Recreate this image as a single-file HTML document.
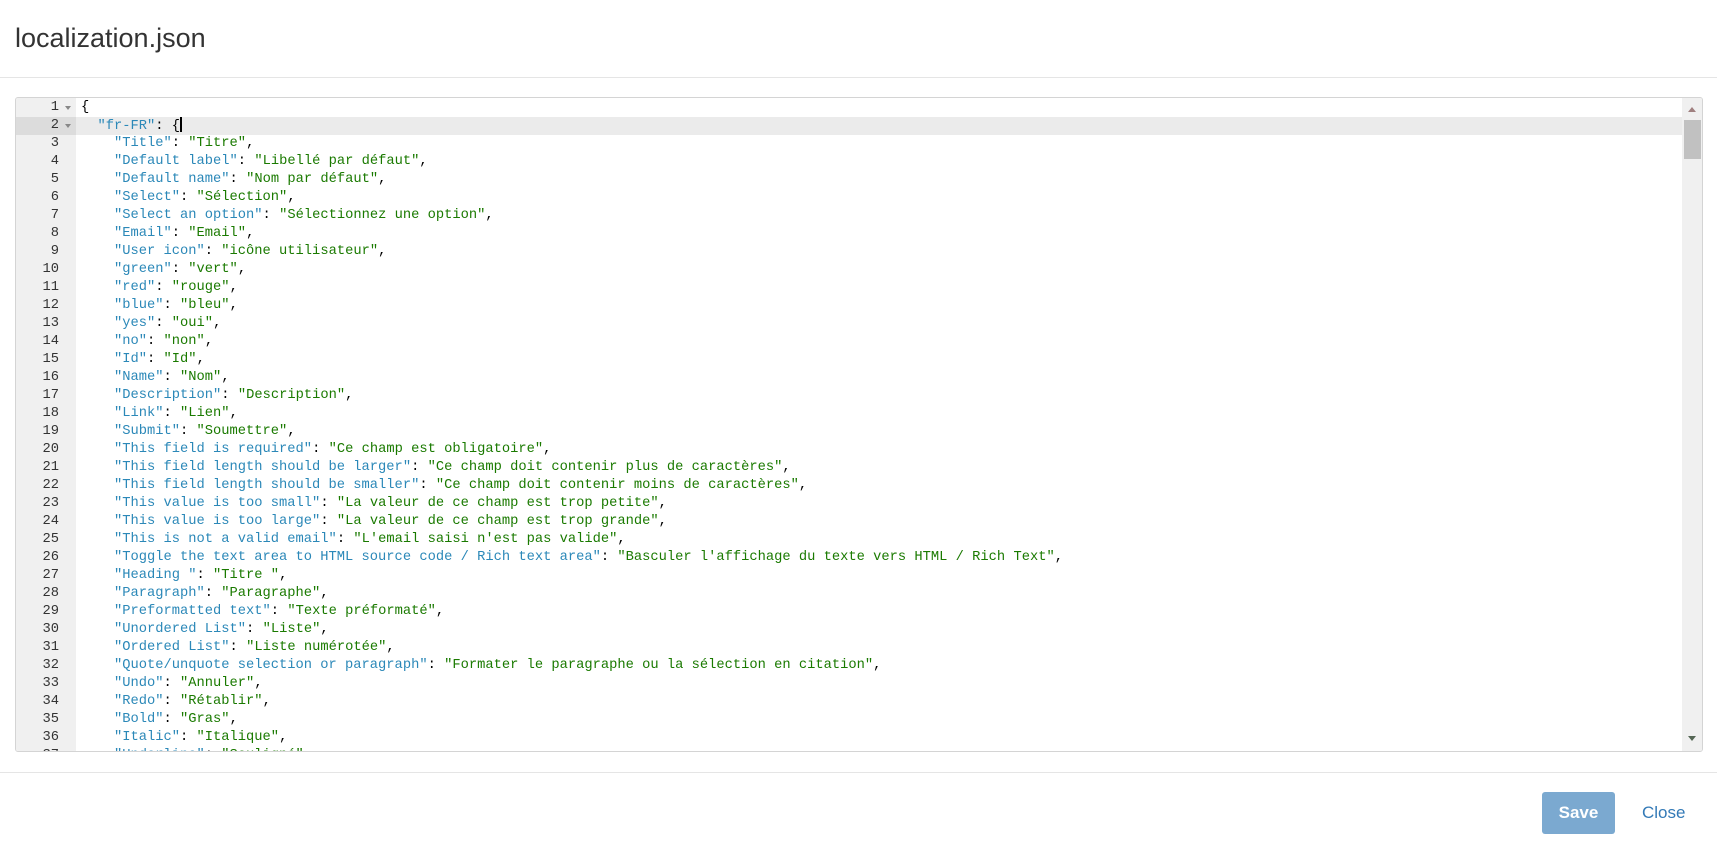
<!DOCTYPE html>
<html><head><meta charset="utf-8"><style>
html,body{margin:0;padding:0;background:#fff;width:1717px;height:845px;overflow:hidden;font-family:"Liberation Sans",Arial,sans-serif}
.title{position:absolute;left:15px;top:20px;font-size:27px;color:#333;line-height:36px}
.hr1{position:absolute;left:0;right:0;top:77px;height:1px;background:#e5e5e5}
.hr2{position:absolute;left:0;right:0;top:772px;height:1px;background:#e5e5e5}
.ed{position:absolute;left:15px;top:97px;width:1686px;height:653px;border:1px solid #d4d4d4;border-radius:3px;overflow:hidden;background:#fff}
.gut{position:absolute;left:0;top:0;width:60px;height:100%;background:#f0f0f0}
.lines{position:absolute;left:0;top:1px;right:0;font-family:"Liberation Mono",monospace;font-size:13.75px;line-height:18px}
.l{height:18px;position:relative}
.l.a{background:#ebebeb}
.l.a .n{background:#dcdcdc}
.n{position:absolute;left:0;width:60px;text-align:right;box-sizing:border-box;padding-right:17px;color:#333}
.f::after{content:"";position:absolute;right:5px;top:7px;border-left:3.5px solid transparent;border-right:3.5px solid transparent;border-top:4px solid #888}
.c{position:absolute;left:65px;color:#000;white-space:pre}
.k{color:#2b88b8}.v{color:#1a7a00}
.cur{display:inline-block;width:1.5px;height:15px;background:#000;vertical-align:-3px}
.sb{position:absolute;right:0;top:0;width:20px;height:100%;background:#f0f0f0}
.th{position:absolute;left:2px;top:22px;width:17px;height:39px;background:#c1c1c1}
.up{position:absolute;left:6px;top:9px;border-left:4.5px solid transparent;border-right:4.5px solid transparent;border-bottom:5px solid #a08080}
.dn{position:absolute;left:6px;bottom:10px;border-left:4.5px solid transparent;border-right:4.5px solid transparent;border-top:5px solid #556655}
.save{position:absolute;left:1542px;top:792px;width:73px;height:42px;background:#7ba9d0;border-radius:3px;color:#fff;font-size:17px;font-weight:bold;text-align:center;line-height:42px}
.close{position:absolute;left:1642px;top:792px;line-height:42px;font-size:17px;color:#337ab7}
</style></head><body>
<div class="title">localization.json</div>
<div class="hr1"></div>
<div class="ed"><div class="gut"></div>
<div class="lines">
<div class="l"><span class="n f">1</span><span class="c">{</span></div>
<div class="l a"><span class="n f">2</span><span class="c">  <span class="k">"fr-FR"</span>: {<span class="cur"></span></span></div>
<div class="l"><span class="n">3</span><span class="c">    <span class="k">"Title"</span>: <span class="v">"Titre"</span>,</span></div>
<div class="l"><span class="n">4</span><span class="c">    <span class="k">"Default label"</span>: <span class="v">"Libellé par défaut"</span>,</span></div>
<div class="l"><span class="n">5</span><span class="c">    <span class="k">"Default name"</span>: <span class="v">"Nom par défaut"</span>,</span></div>
<div class="l"><span class="n">6</span><span class="c">    <span class="k">"Select"</span>: <span class="v">"Sélection"</span>,</span></div>
<div class="l"><span class="n">7</span><span class="c">    <span class="k">"Select an option"</span>: <span class="v">"Sélectionnez une option"</span>,</span></div>
<div class="l"><span class="n">8</span><span class="c">    <span class="k">"Email"</span>: <span class="v">"Email"</span>,</span></div>
<div class="l"><span class="n">9</span><span class="c">    <span class="k">"User icon"</span>: <span class="v">"icône utilisateur"</span>,</span></div>
<div class="l"><span class="n">10</span><span class="c">    <span class="k">"green"</span>: <span class="v">"vert"</span>,</span></div>
<div class="l"><span class="n">11</span><span class="c">    <span class="k">"red"</span>: <span class="v">"rouge"</span>,</span></div>
<div class="l"><span class="n">12</span><span class="c">    <span class="k">"blue"</span>: <span class="v">"bleu"</span>,</span></div>
<div class="l"><span class="n">13</span><span class="c">    <span class="k">"yes"</span>: <span class="v">"oui"</span>,</span></div>
<div class="l"><span class="n">14</span><span class="c">    <span class="k">"no"</span>: <span class="v">"non"</span>,</span></div>
<div class="l"><span class="n">15</span><span class="c">    <span class="k">"Id"</span>: <span class="v">"Id"</span>,</span></div>
<div class="l"><span class="n">16</span><span class="c">    <span class="k">"Name"</span>: <span class="v">"Nom"</span>,</span></div>
<div class="l"><span class="n">17</span><span class="c">    <span class="k">"Description"</span>: <span class="v">"Description"</span>,</span></div>
<div class="l"><span class="n">18</span><span class="c">    <span class="k">"Link"</span>: <span class="v">"Lien"</span>,</span></div>
<div class="l"><span class="n">19</span><span class="c">    <span class="k">"Submit"</span>: <span class="v">"Soumettre"</span>,</span></div>
<div class="l"><span class="n">20</span><span class="c">    <span class="k">"This field is required"</span>: <span class="v">"Ce champ est obligatoire"</span>,</span></div>
<div class="l"><span class="n">21</span><span class="c">    <span class="k">"This field length should be larger"</span>: <span class="v">"Ce champ doit contenir plus de caractères"</span>,</span></div>
<div class="l"><span class="n">22</span><span class="c">    <span class="k">"This field length should be smaller"</span>: <span class="v">"Ce champ doit contenir moins de caractères"</span>,</span></div>
<div class="l"><span class="n">23</span><span class="c">    <span class="k">"This value is too small"</span>: <span class="v">"La valeur de ce champ est trop petite"</span>,</span></div>
<div class="l"><span class="n">24</span><span class="c">    <span class="k">"This value is too large"</span>: <span class="v">"La valeur de ce champ est trop grande"</span>,</span></div>
<div class="l"><span class="n">25</span><span class="c">    <span class="k">"This is not a valid email"</span>: <span class="v">"L'email saisi n'est pas valide"</span>,</span></div>
<div class="l"><span class="n">26</span><span class="c">    <span class="k">"Toggle the text area to HTML source code / Rich text area"</span>: <span class="v">"Basculer l'affichage du texte vers HTML / Rich Text"</span>,</span></div>
<div class="l"><span class="n">27</span><span class="c">    <span class="k">"Heading "</span>: <span class="v">"Titre "</span>,</span></div>
<div class="l"><span class="n">28</span><span class="c">    <span class="k">"Paragraph"</span>: <span class="v">"Paragraphe"</span>,</span></div>
<div class="l"><span class="n">29</span><span class="c">    <span class="k">"Preformatted text"</span>: <span class="v">"Texte préformaté"</span>,</span></div>
<div class="l"><span class="n">30</span><span class="c">    <span class="k">"Unordered List"</span>: <span class="v">"Liste"</span>,</span></div>
<div class="l"><span class="n">31</span><span class="c">    <span class="k">"Ordered List"</span>: <span class="v">"Liste numérotée"</span>,</span></div>
<div class="l"><span class="n">32</span><span class="c">    <span class="k">"Quote/unquote selection or paragraph"</span>: <span class="v">"Formater le paragraphe ou la sélection en citation"</span>,</span></div>
<div class="l"><span class="n">33</span><span class="c">    <span class="k">"Undo"</span>: <span class="v">"Annuler"</span>,</span></div>
<div class="l"><span class="n">34</span><span class="c">    <span class="k">"Redo"</span>: <span class="v">"Rétablir"</span>,</span></div>
<div class="l"><span class="n">35</span><span class="c">    <span class="k">"Bold"</span>: <span class="v">"Gras"</span>,</span></div>
<div class="l"><span class="n">36</span><span class="c">    <span class="k">"Italic"</span>: <span class="v">"Italique"</span>,</span></div>
<div class="l"><span class="n">37</span><span class="c">    <span class="k">"Underline"</span>: <span class="v">"Souligné"</span>,</span></div>
</div>
<div class="sb"><div class="up"></div><div class="th"></div><div class="dn"></div></div>
</div>
<div class="hr2"></div>
<div class="save">Save</div>
<div class="close">Close</div>
</body></html>
